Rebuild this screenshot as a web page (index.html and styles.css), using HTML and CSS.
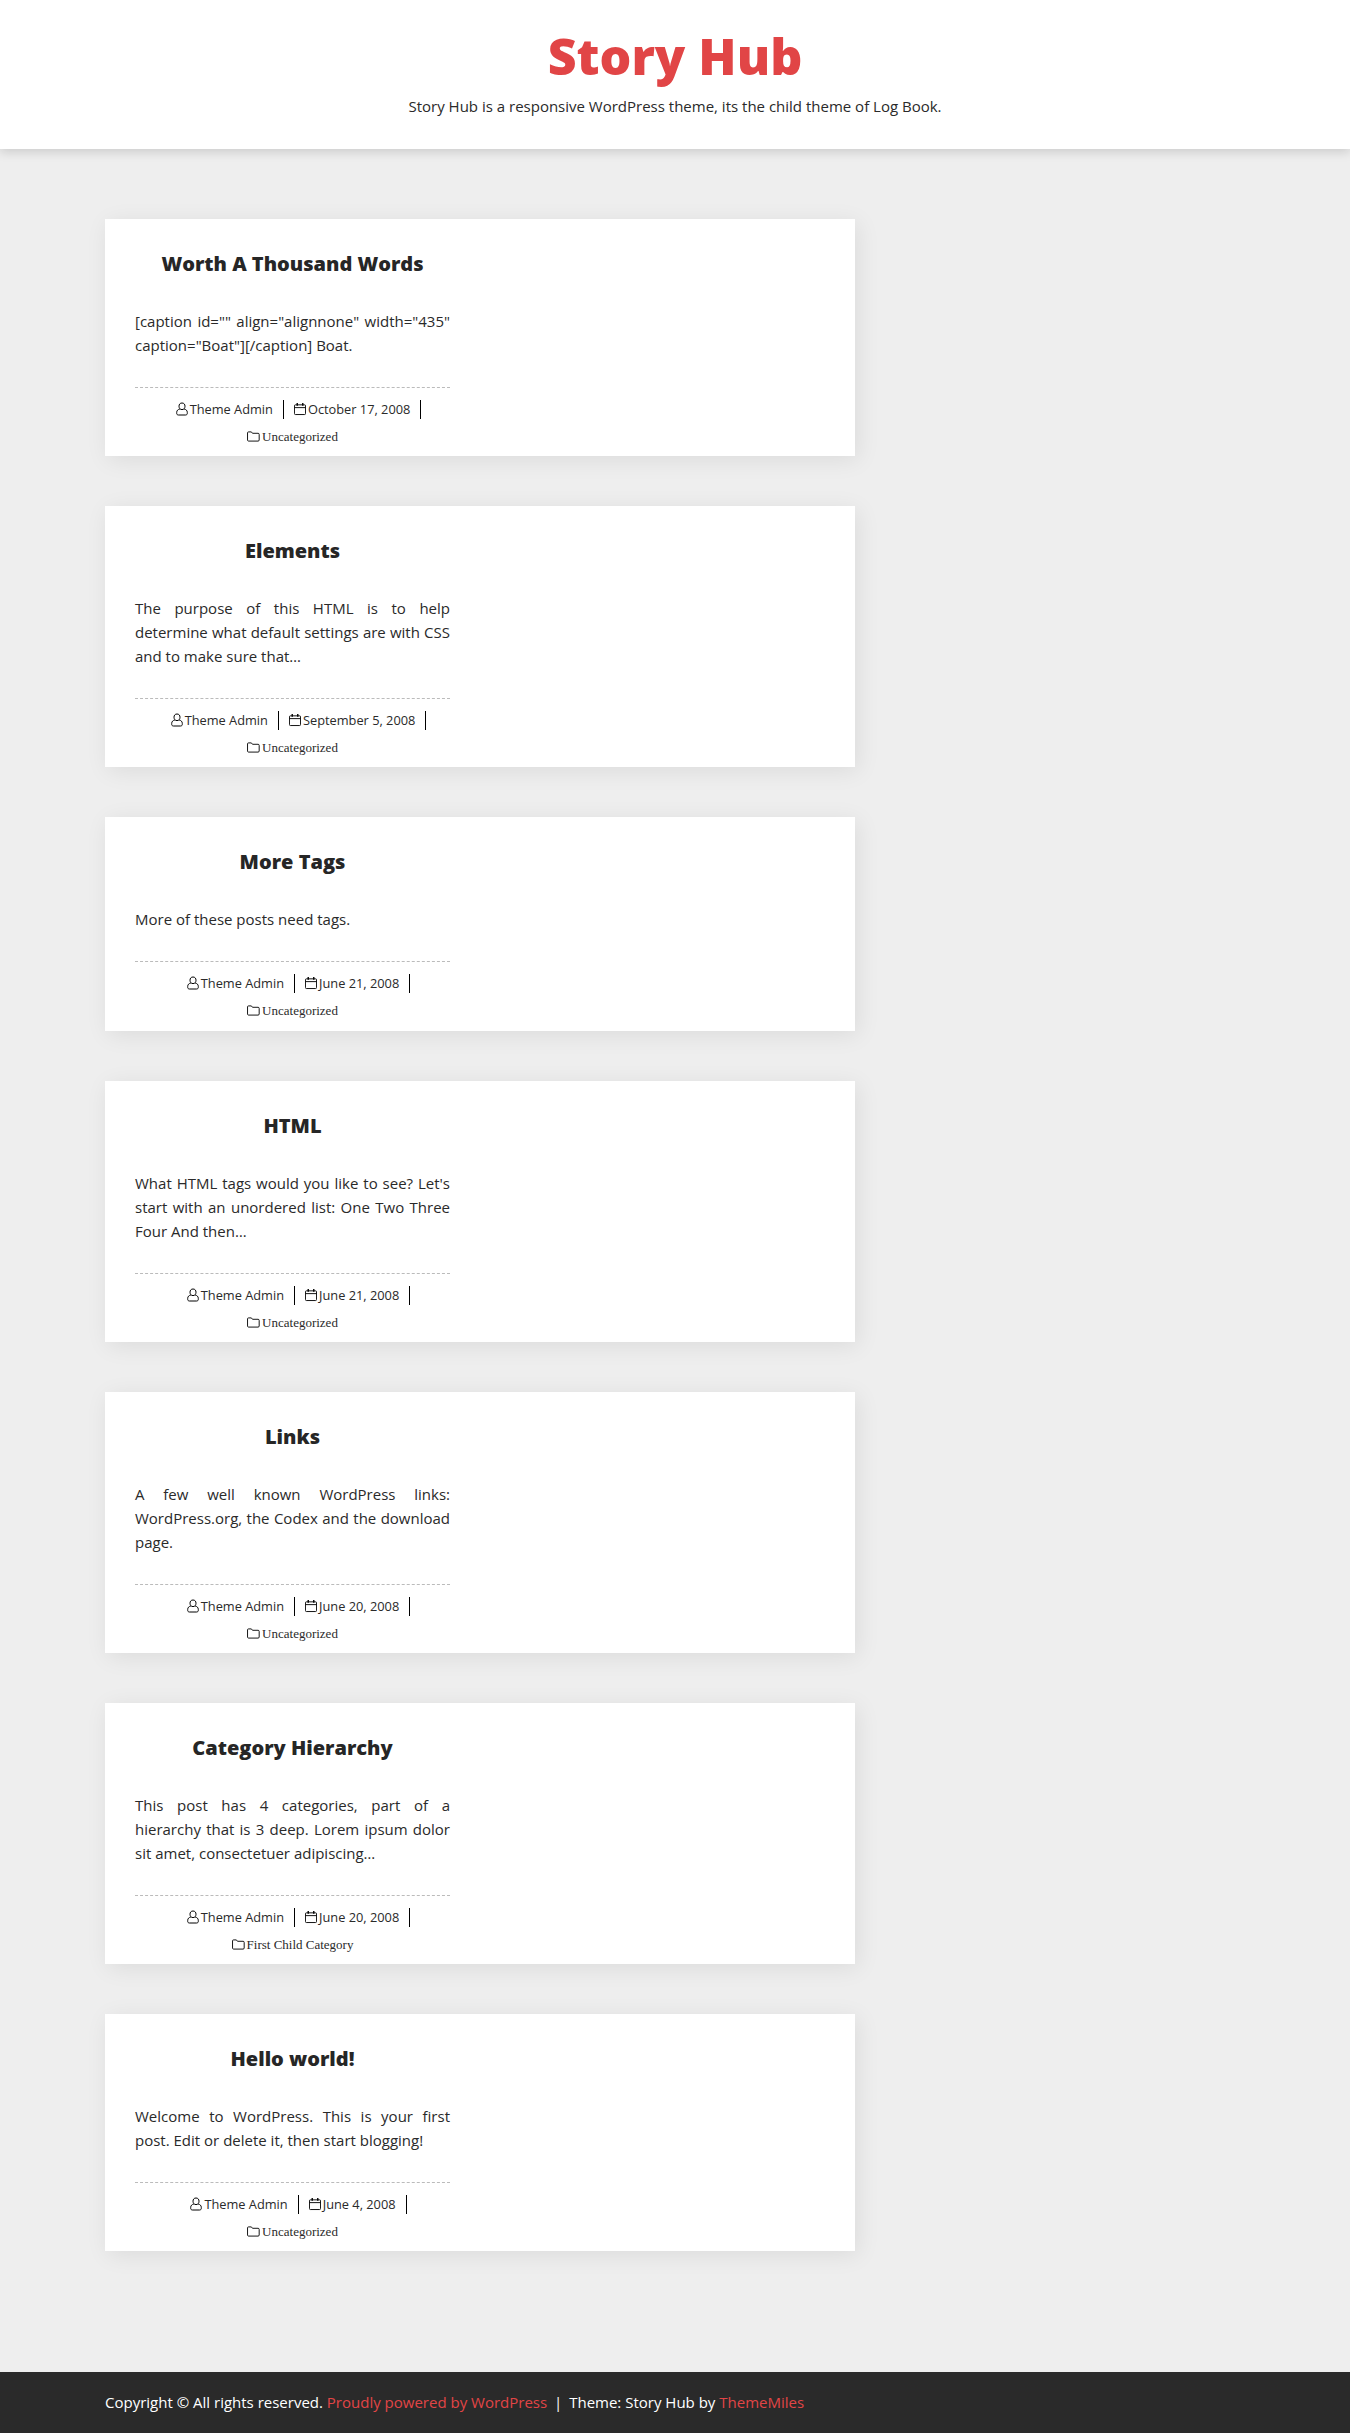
FILE: index.html
```html
<!DOCTYPE html>
<html lang="en">
<head>
  <meta charset="UTF-8">
  <title>Story Hub</title>
  <link rel="stylesheet" href="styles.css">
</head>
<body>
  <svg class="icon-defs" width="0" height="0">
    <symbol id="i-user" viewBox="0 0 12 14"><path d="M6 1c2 0 3 1.400 3 3.200S8 7.600 6 7.600 3 6 3 4.200 4 1 6 1zM3.900 7c-1.900.3-3.200 1.500-3.200 3.500v.9c0 1 .7 1.600 1.700 1.600h7.200c1 0 1.700-.6 1.700-1.600v-.9c0-2-1.300-3.200-3.200-3.500" fill="none" stroke="currentColor"/></symbol>
    <symbol id="i-cal" viewBox="0 0 13 14"><path d="M1.500 2.500h10a1 1 0 0 1 1 1v8.500a1 1 0 0 1-1 1h-10a1 1 0 0 1-1-1V3.500a1 1 0 0 1 1-1zM.5 5.500h12" fill="none" stroke="currentColor"/><path d="M3.500.5v3M9.500.5v3" fill="none" stroke="currentColor" stroke-width="1.500"/></symbol>
    <symbol id="i-folder" viewBox="0 0 14 12"><path d="M1.500 1h3.200l1.200 1.500h6.100a1.200 1.200 0 0 1 1.200 1.200v6.100a1.200 1.200 0 0 1-1.200 1.200H1.500A1.200 1.200 0 0 1 .5 9.800V2a1 1 0 0 1 1-1z" fill="none" stroke="currentColor"/></symbol>
  </svg>

  <header class="site-header">
    <h1 class="site-title">Story Hub</h1>
    <p class="site-desc">Story Hub is a responsive WordPress theme, its the child theme of Log Book.</p>
  </header>

  <main class="posts">
    <article class="post">
      <div class="post-col">
        <h2 class="post-title">Worth A Thousand Words</h2>
        <p class="post-text">[caption id="" align="alignnone" width="435" caption="Boat"][/caption] Boat.</p>
        <div class="post-meta">
          <div class="meta-row">
            <span class="meta-item"><svg class="ic"><use href="#i-user"/></svg>Theme Admin</span>
            <span class="meta-item"><svg class="ic"><use href="#i-cal"/></svg>October 17, 2008</span>
          </div>
          <div class="meta-cat"><svg class="ic ic-folder"><use href="#i-folder"/></svg>Uncategorized</div>
        </div>
      </div>
    </article>

    <article class="post">
      <div class="post-col">
        <h2 class="post-title">Elements</h2>
        <p class="post-text">The purpose of this HTML is to help determine what default settings are with CSS and to make sure that&hellip;</p>
        <div class="post-meta">
          <div class="meta-row">
            <span class="meta-item"><svg class="ic"><use href="#i-user"/></svg>Theme Admin</span>
            <span class="meta-item"><svg class="ic"><use href="#i-cal"/></svg>September 5, 2008</span>
          </div>
          <div class="meta-cat"><svg class="ic ic-folder"><use href="#i-folder"/></svg>Uncategorized</div>
        </div>
      </div>
    </article>

    <article class="post">
      <div class="post-col">
        <h2 class="post-title">More Tags</h2>
        <p class="post-text">More of these posts need tags.</p>
        <div class="post-meta">
          <div class="meta-row">
            <span class="meta-item"><svg class="ic"><use href="#i-user"/></svg>Theme Admin</span>
            <span class="meta-item"><svg class="ic"><use href="#i-cal"/></svg>June 21, 2008</span>
          </div>
          <div class="meta-cat"><svg class="ic ic-folder"><use href="#i-folder"/></svg>Uncategorized</div>
        </div>
      </div>
    </article>

    <article class="post">
      <div class="post-col">
        <h2 class="post-title">HTML</h2>
        <p class="post-text">What HTML tags would you like to see? Let's start with an unordered list: One Two Three Four And then&hellip;</p>
        <div class="post-meta">
          <div class="meta-row">
            <span class="meta-item"><svg class="ic"><use href="#i-user"/></svg>Theme Admin</span>
            <span class="meta-item"><svg class="ic"><use href="#i-cal"/></svg>June 21, 2008</span>
          </div>
          <div class="meta-cat"><svg class="ic ic-folder"><use href="#i-folder"/></svg>Uncategorized</div>
        </div>
      </div>
    </article>

    <article class="post">
      <div class="post-col">
        <h2 class="post-title">Links</h2>
        <p class="post-text">A few well known WordPress links: WordPress.org, the Codex and the download page.</p>
        <div class="post-meta">
          <div class="meta-row">
            <span class="meta-item"><svg class="ic"><use href="#i-user"/></svg>Theme Admin</span>
            <span class="meta-item"><svg class="ic"><use href="#i-cal"/></svg>June 20, 2008</span>
          </div>
          <div class="meta-cat"><svg class="ic ic-folder"><use href="#i-folder"/></svg>Uncategorized</div>
        </div>
      </div>
    </article>

    <article class="post">
      <div class="post-col">
        <h2 class="post-title">Category Hierarchy</h2>
        <p class="post-text">This post has 4 categories, part of a hierarchy that is 3 deep. Lorem ipsum dolor sit amet, consectetuer adipiscing&hellip;</p>
        <div class="post-meta">
          <div class="meta-row">
            <span class="meta-item"><svg class="ic"><use href="#i-user"/></svg>Theme Admin</span>
            <span class="meta-item"><svg class="ic"><use href="#i-cal"/></svg>June 20, 2008</span>
          </div>
          <div class="meta-cat"><svg class="ic ic-folder"><use href="#i-folder"/></svg>First Child Category</div>
        </div>
      </div>
    </article>

    <article class="post">
      <div class="post-col">
        <h2 class="post-title">Hello world!</h2>
        <p class="post-text">Welcome to WordPress. This is your first post. Edit or delete it, then start blogging!</p>
        <div class="post-meta">
          <div class="meta-row">
            <span class="meta-item"><svg class="ic"><use href="#i-user"/></svg>Theme Admin</span>
            <span class="meta-item"><svg class="ic"><use href="#i-cal"/></svg>June 4, 2008</span>
          </div>
          <div class="meta-cat"><svg class="ic ic-folder"><use href="#i-folder"/></svg>Uncategorized</div>
        </div>
      </div>
    </article>
  </main>

  <footer class="site-footer">
    Copyright &copy; All rights reserved. <a href="#">Proudly powered by WordPress</a> <span class="sep">|</span> Theme: Story Hub by <a href="#">ThemeMiles</a>
  </footer>
</body>
</html>
```

FILE: styles.css
```css
* { box-sizing: border-box; margin: 0; padding: 0; }
body {
  font-family: "Open Sans", sans-serif;
  background: #eee;
  color: #2a2a2a;
  height: 2433px;
  display: flex;
  flex-direction: column;
}
.icon-defs { position: absolute; }
a { color: #e14546; text-decoration: none; }

.site-header {
  height: 149px;
  background: #fff;
  box-shadow: 0 3px 10px rgba(0, 0, 0, 0.15);
  text-align: center;
  padding-top: 22px;
}
.site-title {
  font-size: 50px;
  line-height: 68px;
  font-weight: 800;
  color: #e14546;
}
.site-desc {
  font-size: 15px;
  line-height: 24px;
  margin-top: 4px;
}

.posts {
  flex: 1;
  width: 750px;
  margin-left: 105px;
  padding-top: 70px;
  display: flex;
  flex-direction: column;
  gap: 50px;
}
.post {
  background: #fff;
  box-shadow: 3px 4px 22px rgba(0, 0, 0, 0.08);
}
.post-col {
  width: 375px;
  padding: 30px 30px 10.200px;
}
.post-title {
  font-size: 20px;
  line-height: 30px;
  font-weight: 800;
  text-align: center;
  color: #262626;
}
.post-text {
  font-size: 15px;
  line-height: 24px;
  text-align: justify;
  margin-top: 30px;
}
.post-meta {
  margin-top: 30px;
  padding-top: 12px;
  border-top: 1px dashed #bbb;
  text-align: center;
}
.meta-row {
  display: flex;
  justify-content: center;
  font-size: 12.800px;
  line-height: 19px;
}
.meta-item {
  padding: 0 10px;
  border-right: 1px solid #000;
}
.meta-item:first-child { padding-left: 12px; }
.ic {
  width: 12px;
  height: 14px;
  margin-right: 2px;
  vertical-align: -2px;
  color: #000;
}
.ic-folder { height: 11px; width: 13px; vertical-align: -1px; }
.meta-cat {
  font-family: "Liberation Serif", serif;
  font-size: 13px;
  line-height: 18px;
  margin-top: 9px;
}

.site-footer {
  height: 61px;
  background: #2a2a2a;
  color: #fff;
  font-size: 15px;
  line-height: 61px;
  padding-left: 105px;
}
.sep { margin: 0 3px; }
```
